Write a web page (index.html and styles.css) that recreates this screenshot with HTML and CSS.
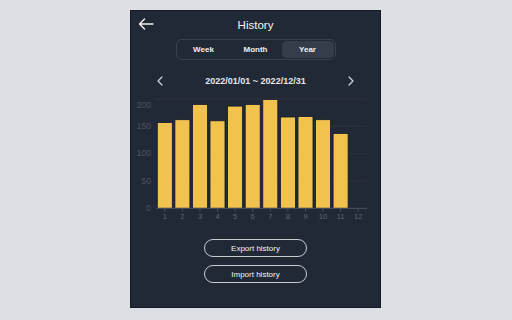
FILE: index.html
```html
<!DOCTYPE html>
<html>
<head>
<meta charset="utf-8">
<link rel="stylesheet" href="styles.css">
</head>
<body>
<div class="panel">
  <div class="header">
    <svg class="back" width="16" height="12" viewBox="0 0 16 12"><path d="M15 6H1.5M6.5 1L1.5 6l5 5" fill="none" stroke="#f3f4f6" stroke-width="1.4" stroke-linecap="round" stroke-linejoin="round"/></svg>
    <div class="title">History</div>
  </div>
  <div class="seg">
    <div class="seg-item">Week</div>
    <div class="seg-item">Month</div>
    <div class="seg-item active">Year</div>
  </div>
  <div class="range">
    <svg class="chev" width="6" height="10" viewBox="0 0 6 10"><path d="M5 1L1 5l4 4" fill="none" stroke="#d1d5db" stroke-width="1.2" stroke-linecap="round" stroke-linejoin="round"/></svg>
    <div class="range-text">2022/01/01 ~ 2022/12/31</div>
    <svg class="chev" width="6" height="10" viewBox="0 0 6 10"><path d="M1 1l4 4-4 4" fill="none" stroke="#d1d5db" stroke-width="1.2" stroke-linecap="round" stroke-linejoin="round"/></svg>
  </div>
  <svg class="chart" width="248" height="127" viewBox="0 0 248 127">
    <g class="grid">
      <line x1="25" y1="3" x2="236" y2="3"/>
      <line x1="25" y1="30.3" x2="236" y2="30.3"/>
      <line x1="25" y1="57.7" x2="236" y2="57.7"/>
      <line x1="25" y1="85" x2="236" y2="85"/>
    </g>
    <g class="ylab">
      <text x="20" y="9.3">200</text>
      <text x="20" y="30.7">150</text>
      <text x="20" y="58">100</text>
      <text x="20" y="85.3">50</text>
      <text x="20" y="112.3">0</text>
    </g>
    <g class="bars">
      <rect x="26.3" y="26.5" width="15" height="85.8"/>
      <rect x="43.9" y="23.7" width="15" height="88.6"/>
      <rect x="61.5" y="8.4" width="15" height="103.9"/>
      <rect x="79.0" y="24.8" width="15" height="87.5"/>
      <rect x="96.6" y="10.1" width="15" height="102.2"/>
      <rect x="114.2" y="8.4" width="15" height="103.9"/>
      <rect x="131.8" y="3.5" width="15" height="108.8"/>
      <rect x="149.4" y="21.0" width="15" height="91.3"/>
      <rect x="167.0" y="20.5" width="15" height="91.8"/>
      <rect x="184.5" y="23.7" width="15" height="88.6"/>
      <rect x="202.1" y="37.4" width="15" height="74.9"/>
    </g>
    <line class="axis" x1="25" y1="112.3" x2="236" y2="112.3"/>
    <g class="ticks">
      <line x1="33.8" y1="112.3" x2="33.8" y2="115.5"/>
      <line x1="51.4" y1="112.3" x2="51.4" y2="115.5"/>
      <line x1="69" y1="112.3" x2="69" y2="115.5"/>
      <line x1="86.5" y1="112.3" x2="86.5" y2="115.5"/>
      <line x1="104.1" y1="112.3" x2="104.1" y2="115.5"/>
      <line x1="121.7" y1="112.3" x2="121.7" y2="115.5"/>
      <line x1="139.3" y1="112.3" x2="139.3" y2="115.5"/>
      <line x1="156.9" y1="112.3" x2="156.9" y2="115.5"/>
      <line x1="174.5" y1="112.3" x2="174.5" y2="115.5"/>
      <line x1="192" y1="112.3" x2="192" y2="115.5"/>
      <line x1="209.6" y1="112.3" x2="209.6" y2="115.5"/>
      <line x1="227.2" y1="112.3" x2="227.2" y2="115.5"/>
    </g>
    <g class="xlab">
      <text x="33.8" y="120.7">1</text>
      <text x="51.4" y="120.7">2</text>
      <text x="69" y="120.7">3</text>
      <text x="86.5" y="120.7">4</text>
      <text x="104.1" y="120.7">5</text>
      <text x="121.7" y="120.7">6</text>
      <text x="139.3" y="120.7">7</text>
      <text x="156.9" y="120.7">8</text>
      <text x="174.5" y="120.7">9</text>
      <text x="192" y="120.7">10</text>
      <text x="209.6" y="120.7">11</text>
      <text x="227.2" y="120.7">12</text>
    </g>
  </svg>
  <div class="actions">
    <button class="pill">Export history</button>
    <button class="pill">Import history</button>
  </div>
</div>
</body>
</html>
```
FILE: styles.css
```css
html, body {
  margin: 0;
  padding: 0;
}
body {
  width: 512px;
  height: 320px;
  background: #dcdfe3;
  font-family: "Liberation Sans", Arial, sans-serif;
  overflow: hidden;
}
.panel {
  box-sizing: border-box;
  width: 251px;
  height: 298px;
  margin: 10px 0 0 130px;
  background: #222936;
  border: 1px solid #141922;
  display: flex;
  flex-direction: column;
  align-items: center;
}
.header {
  width: 100%;
  height: 28px;
  display: flex;
  align-items: center;
  justify-content: center;
  position: relative;
}
.back {
  position: absolute;
  left: 7px;
  top: 7px;
}
.title {
  color: #f3f4f6;
  font-size: 11.5px;
}
.seg {
  box-sizing: border-box;
  width: 160px;
  height: 21px;
  border: 1px solid #3a414e;
  border-radius: 6px;
  padding: 1px;
  display: flex;
}
.seg-item {
  flex: 1;
  display: flex;
  align-items: center;
  justify-content: center;
  color: #eef0f3;
  font-size: 8px;
  font-weight: 700;
  border-radius: 5px;
}
.seg-item.active {
  background: #363d4a;
}
.range {
  width: 198px;
  height: 20px;
  margin-top: 11px;
  display: flex;
  align-items: center;
  justify-content: space-between;
}
.range-text {
  color: #e5e7eb;
  font-size: 9px;
  font-weight: 700;
}
.chart {
  display: block;
  margin-top: 5px;
  align-self: flex-start;
}
.grid line {
  stroke: #2c3341;
  stroke-width: 1;
}
.axis {
  stroke: #4b5361;
  stroke-width: 1;
}
.ticks line {
  stroke: #4b5361;
  stroke-width: 1;
}
.ylab text {
  fill: #4d5563;
  font-family: "Liberation Sans", Arial, sans-serif;
  font-size: 8.5px;
  text-anchor: end;
  dominant-baseline: middle;
}
.xlab text {
  fill: #5d6573;
  font-family: "Liberation Sans", Arial, sans-serif;
  font-size: 7.5px;
  text-anchor: middle;
  dominant-baseline: middle;
}
.bars rect {
  fill: #f2c24f;
  stroke: #111a2b;
  stroke-width: 0.8;
}
.actions {
  margin-top: 16px;
  display: flex;
  flex-direction: column;
  gap: 8px;
}
.pill {
  box-sizing: border-box;
  width: 103px;
  height: 18px;
  border: 1.5px solid #c8cbd0;
  border-radius: 9px;
  background: transparent;
  color: #f3f4f6;
  font-family: "Liberation Sans", Arial, sans-serif;
  font-size: 8px;
  padding: 0;
}
```
